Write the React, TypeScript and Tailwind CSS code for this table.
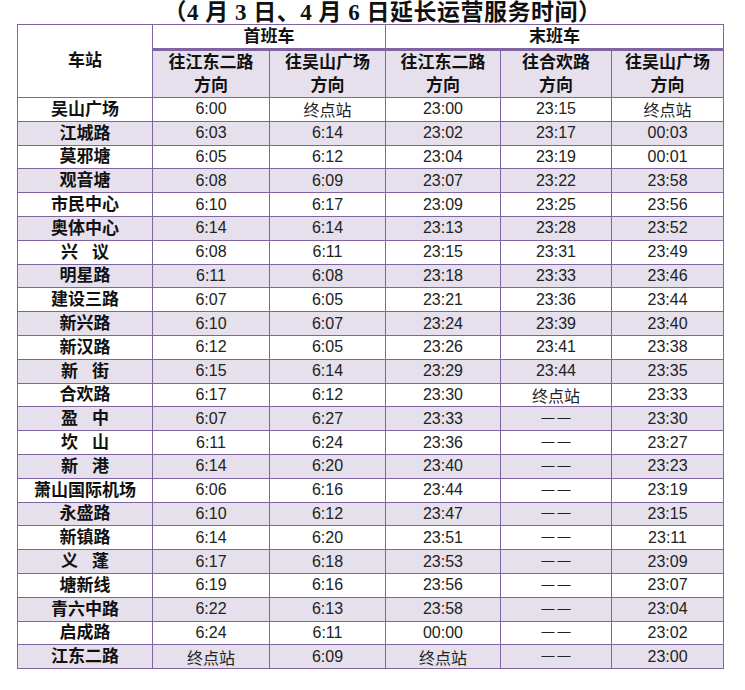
const rows: string[][] = [
  ["吴山广场", "6:00", "终点站", "23:00", "23:15", "终点站"],
  ["江城路", "6:03", "6:14", "23:02", "23:17", "00:03"],
  ["莫邪塘", "6:05", "6:12", "23:04", "23:19", "00:01"],
  ["观音塘", "6:08", "6:09", "23:07", "23:22", "23:58"],
  ["市民中心", "6:10", "6:17", "23:09", "23:25", "23:56"],
  ["奥体中心", "6:14", "6:14", "23:13", "23:28", "23:52"],
  ["兴\u00a0\u00a0\u00a0议", "6:08", "6:11", "23:15", "23:31", "23:49"],
  ["明星路", "6:11", "6:08", "23:18", "23:33", "23:46"],
  ["建设三路", "6:07", "6:05", "23:21", "23:36", "23:44"],
  ["新兴路", "6:10", "6:07", "23:24", "23:39", "23:40"],
  ["新汉路", "6:12", "6:05", "23:26", "23:41", "23:38"],
  ["新\u00a0\u00a0\u00a0街", "6:15", "6:14", "23:29", "23:44", "23:35"],
  ["合欢路", "6:17", "6:12", "23:30", "终点站", "23:33"],
  ["盈\u00a0\u00a0\u00a0中", "6:07", "6:27", "23:33", "——", "23:30"],
  ["坎\u00a0\u00a0\u00a0山", "6:11", "6:24", "23:36", "——", "23:27"],
  ["新\u00a0\u00a0\u00a0港", "6:14", "6:20", "23:40", "——", "23:23"],
  ["萧山国际机场", "6:06", "6:16", "23:44", "——", "23:19"],
  ["永盛路", "6:10", "6:12", "23:47", "——", "23:15"],
  ["新镇路", "6:14", "6:20", "23:51", "——", "23:11"],
  ["义\u00a0\u00a0\u00a0蓬", "6:17", "6:18", "23:53", "——", "23:09"],
  ["塘新线", "6:19", "6:16", "23:56", "——", "23:07"],
  ["青六中路", "6:22", "6:13", "23:58", "——", "23:04"],
  ["启成路", "6:24", "6:11", "00:00", "——", "23:02"],
  ["江东二路", "终点站", "6:09", "终点站", "——", "23:00"],
];

const Cell = ({ value }: { value: string }) => {
  if (value === "——") {
    return (
      <td className="border border-[#8064a2] text-center text-[13px] font-['Liberation_Sans',sans-serif] text-[#222] leading-none">
        <span className="inline-flex gap-[3px] -translate-y-[1px]">
          <span>—</span>
          <span>—</span>
        </span>
      </td>
    );
  }
  const cjk = /[\u4e00-\u9fff]/.test(value);
  return (
    <td
      className={
        cjk
          ? "border border-[#8064a2] text-center text-[16px] font-['Noto_Sans_CJK_SC',sans-serif] text-[#222] leading-none"
          : "border border-[#8064a2] text-center text-[16px] font-['Liberation_Sans',sans-serif] text-[#222] leading-none"
      }
    >
      {value}
    </td>
  );
};

export default function App() {
  return (
    <div className="w-[745px] h-[690px] bg-white font-['Liberation_Sans','Noto_Sans_CJK_SC',sans-serif]">
      <div className="h-[24px] pl-[20px] flex items-center justify-center">
        <h1 className="text-[23px] leading-none font-bold tracking-[0.5px] font-['Liberation_Serif','Noto_Sans_CJK_SC',serif] text-[#111]">
          （4 月 3 日、4 月 6 日延长运营服务时间）
        </h1>
      </div>
      <table className="ml-[17px] w-[706px] table-fixed border-collapse">
        <colgroup>
          <col className="w-[135px]" />
          <col className="w-[117px]" />
          <col className="w-[116px]" />
          <col className="w-[115px]" />
          <col className="w-[111px]" />
          <col className="w-[112px]" />
        </colgroup>
        <thead className="font-bold text-[17px] text-[#111]">
          <tr className="h-[25px]">
            <th rowSpan={2} className="border border-[#8064a2] bg-white font-bold">
              车站
            </th>
            <th colSpan={2} className="border border-[#8064a2] border-b-[3px] bg-white font-bold leading-none">
              首班车
            </th>
            <th colSpan={3} className="border border-[#8064a2] border-b-[3px] bg-white font-bold leading-none">
              末班车
            </th>
          </tr>
          <tr className="h-[46px] bg-[#e5e0ec]">
            <th className="border border-[#8064a2] font-bold leading-[23px]">
              往江东二路
              <br />
              方向
            </th>
            <th className="border border-[#8064a2] font-bold leading-[23px]">
              往吴山广场
              <br />
              方向
            </th>
            <th className="border border-[#8064a2] font-bold leading-[23px]">
              往江东二路
              <br />
              方向
            </th>
            <th className="border border-[#8064a2] font-bold leading-[23px]">
              往合欢路
              <br />
              方向
            </th>
            <th className="border border-[#8064a2] font-bold leading-[23px]">
              往吴山广场
              <br />
              方向
            </th>
          </tr>
        </thead>
        <tbody>
          {rows.map((r, i) => (
            <tr key={i} className={i % 2 === 1 ? "h-[23.8px] bg-[#e5e0ec]" : "h-[23.8px] bg-white"}>
              <td className="border border-[#8064a2] text-center text-[17px] font-bold text-[#111] leading-none whitespace-nowrap">
                {r[0]}
              </td>
              {r.slice(1).map((v, j) => (
                <Cell key={j} value={v} />
              ))}
            </tr>
          ))}
        </tbody>
      </table>
    </div>
  );
}
